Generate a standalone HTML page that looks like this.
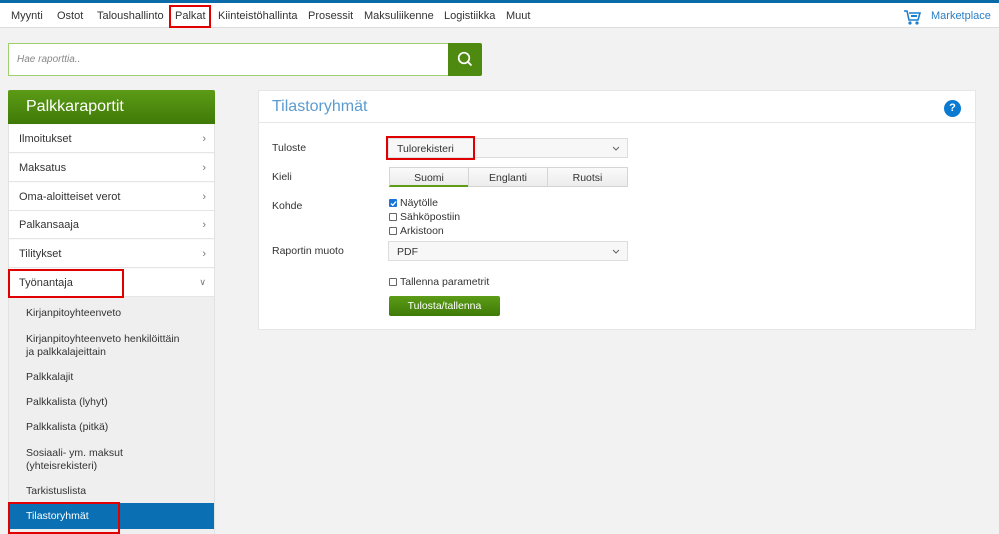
<!DOCTYPE html>
<html><head><meta charset="utf-8"><style>
*{box-sizing:border-box;margin:0;padding:0}
body{width:999px;height:534px;overflow:hidden;background:#f2f2f2;font-family:"Liberation Sans",sans-serif;font-size:11px;color:#333;position:relative}
.abs{position:absolute}
.top{left:0;top:0;width:999px;height:3px;background:#0b6aa8}
.nav{left:0;top:3px;width:999px;height:25px;background:#fff;border-bottom:1px solid #ddd}
.nav span{position:absolute;top:7px;font-size:11px;color:#333}
.red{border:2px solid #e00000;position:absolute}
.search{left:8px;top:43px;width:441px;height:33px;background:#fff;border:1px solid #9fcf70;border-right:none}
.search i{position:absolute;left:8px;top:10px;color:#888;font-size:10px}
.sbtn{left:448px;top:43px;width:34px;height:33px;background:#4f8a10;border-radius:0 2px 2px 0}
.side{left:8px;top:90px;width:207px;height:444px;background:#fafafa;border:1px solid #e2e2e2}
.sh{left:8px;top:90px;width:207px;height:34px;background:linear-gradient(#5c9c16,#3f7a08);color:#fff;font-size:16px;padding:8px 0 0 18px;border-radius:2px 2px 0 0}
.item{position:absolute;left:9px;width:205px;height:28px;background:#fff;border-bottom:1px solid #e5e5e5;padding:8px 0 0 10px;font-size:11px}
.item b{position:absolute;right:8px;top:8px;font-weight:normal;color:#777}
.sub{position:absolute;left:26px;font-size:10.5px;color:#333;line-height:13px}
.panel{left:258px;top:90px;width:718px;height:240px;background:#fff;border:1px solid #e6e6e6}
.ptitle{left:258px;top:90px;width:718px;height:33px;border-bottom:1px solid #e6e6e6}
.lbl{position:absolute;left:272px;font-size:10.5px}
.sel{position:absolute;left:388px;width:240px;height:20px;border:1px solid #ddd;background:#f7f7f7;padding:4px 8px;font-size:10.5px}
.sel svg{position:absolute;right:7px;top:7px}
.seg{position:absolute;top:167px;height:20px;background:linear-gradient(#fafafa,#ececec);border:1px solid #d5d5d5;text-align:center;padding-top:4px;font-size:10.5px}
.cb{position:absolute;left:389px;font-size:10.5px}
.cb i{display:inline-block;width:8px;height:8px;border:1px solid #666;margin-right:3px;vertical-align:-1px;border-radius:1px}
</style></head><body>
<div class="abs top"></div>
<div class="abs nav">
<span style="left:11px">Myynti</span><span style="left:57px">Ostot</span><span style="left:97px">Taloushallinto</span><span style="left:175px">Palkat</span><span style="left:218px">Kiinteistöhallinta</span><span style="left:308px">Prosessit</span><span style="left:364px">Maksuliikenne</span><span style="left:444px">Logistiikka</span><span style="left:506px">Muut</span>
<span style="left:931px;color:#2a7fc4">Marketplace</span>
<svg style="position:absolute;left:903px;top:6px" width="18" height="17" viewBox="0 0 18 17"><path d="M1 2h3l2 9h9l2-7H6" fill="none" stroke="#1a7fd0" stroke-width="1.6"/><circle cx="7" cy="14" r="1.6" fill="#1a7fd0"/><circle cx="14" cy="14" r="1.6" fill="#1a7fd0"/><path d="M8 7h6" stroke="#1a7fd0" stroke-width="2"/></svg>
</div>
<div class="red" style="left:169px;top:5px;width:42px;height:23px"></div>
<div class="abs search"><i>Hae raporttia..</i></div>
<div class="abs sbtn"><svg style="position:absolute;left:9px;top:8px" width="16" height="16" viewBox="0 0 16 16"><circle cx="7" cy="7" r="5.3" fill="none" stroke="#fff" stroke-width="1.7"/><path d="M11 11l3.5 3.5" stroke="#fff" stroke-width="1.8"/></svg></div>
<div class="abs side"></div>
<div class="abs sh">Palkkaraportit</div>
<div class="item" style="top:125px">Ilmoitukset<b>›</b></div>
<div class="item" style="top:154px">Maksatus<b>›</b></div>
<div class="item" style="top:183px">Oma-aloitteiset verot<b>›</b></div>
<div class="item" style="top:211px">Palkansaaja<b>›</b></div>
<div class="item" style="top:240px">Tilitykset<b>›</b></div>
<div class="item" style="top:269px">Työnantaja<b style="font-size:9px">∨</b></div>
<div class="abs" style="left:9px;top:297px;width:205px;height:237px;background:#efefef"></div>
<div class="red" style="left:8px;top:269px;width:116px;height:29px"></div>
<div class="sub" style="top:307px">Kirjanpitoyhteenveto</div>
<div class="sub" style="top:333px">Kirjanpitoyhteenveto henkilöittäin<br>ja palkkalajeittain</div>
<div class="sub" style="top:371px">Palkkalajit</div>
<div class="sub" style="top:396px">Palkkalista (lyhyt)</div>
<div class="sub" style="top:421px">Palkkalista (pitkä)</div>
<div class="sub" style="top:447px">Sosiaali- ym. maksut<br>(yhteisrekisteri)</div>
<div class="sub" style="top:485px">Tarkistuslista</div>
<div class="abs" style="left:9px;top:503px;width:205px;height:26px;background:#0b6fb3"></div>
<div class="sub" style="top:510px;color:#fff">Tilastoryhmät</div>
<div class="red" style="left:8px;top:502px;width:112px;height:32px"></div>
<div class="abs panel"></div>
<div class="abs ptitle"><span style="position:absolute;left:14px;top:8px;font-size:16px;color:#5b9bd1">Tilastoryhmät</span>
<div style="position:absolute;left:686px;top:10px;width:17px;height:17px;border-radius:50%;background:#0b7ad1;color:#fff;font-weight:bold;font-size:11px;text-align:center;line-height:17px">?</div></div>
<div class="lbl" style="top:142px">Tuloste</div>
<div class="sel" style="top:138px">Tulorekisteri<svg width="8" height="5" viewBox="0 0 8 5"><path d="M1 1l3 3 3-3" fill="none" stroke="#666"/></svg></div>
<div class="red" style="left:386px;top:136px;width:89px;height:24px"></div>
<div class="lbl" style="top:171px">Kieli</div>
<div class="seg" style="left:389px;width:80px;border-bottom:2px solid #5c9c16">Suomi</div>
<div class="seg" style="left:468px;width:80px">Englanti</div>
<div class="seg" style="left:547px;width:81px">Ruotsi</div>
<div class="lbl" style="top:200px">Kohde</div>
<div class="cb" style="top:197px"><i style="background:#1a73d9;border-color:#1a73d9;position:relative"><svg style="position:absolute;left:0;top:0" width="7" height="7" viewBox="0 0 7 7"><path d="M1 3.5l1.8 1.8L6 1.5" fill="none" stroke="#fff" stroke-width="1.3"/></svg></i>Näytölle</div>
<div class="cb" style="top:211px"><i></i>Sähköpostiin</div>
<div class="cb" style="top:225px"><i></i>Arkistoon</div>
<div class="lbl" style="top:245px">Raportin muoto</div>
<div class="sel" style="top:241px">PDF<svg width="8" height="5" viewBox="0 0 8 5"><path d="M1 1l3 3 3-3" fill="none" stroke="#666"/></svg></div>
<div class="cb" style="top:276px"><i></i>Tallenna parametrit</div>
<div class="abs" style="left:389px;top:296px;width:111px;height:20px;background:linear-gradient(#5c9c16,#3f7a08);border-radius:2px;color:#fff;text-align:center;padding-top:4px;font-size:10.5px">Tulosta/tallenna</div>
</body></html>
